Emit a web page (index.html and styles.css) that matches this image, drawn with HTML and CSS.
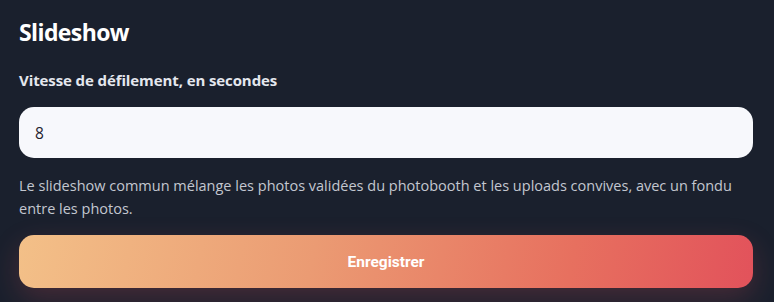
FILE: index.html
```html
<!DOCTYPE html>
<html lang="fr">
<head>
    <meta charset="UTF-8">
    <meta name="viewport" content="width=device-width, initial-scale=1.0">
    <title>Slideshow</title>
    <link rel="stylesheet" href="styles.css">
</head>
<body>
    <div class="panel">
        <h2>Slideshow</h2>

        <label class="field-label" for="speed">Vitesse de défilement, en secondes</label>
        <input class="field-input" id="speed" type="text" value="8">

        <p class="hint">Le slideshow commun mélange les photos validées du photobooth et les uploads convives, avec un fondu entre les photos.</p>

        <button class="btn-save">Enregistrer</button>
    </div>
</body>
</html>
```
FILE: styles.css
```css
html, body {
    margin: 0;
    height: 100%;
}

body {
    font-family: 'Open Sans', 'Noto Sans', sans-serif;
    background: #1a202d;
    color: #f5f6fa;
    overflow: hidden;
}

.panel {
    padding: 14px 21px 0 19px;
    display: flex;
    flex-direction: column;
}

h2 {
    margin: 0;
    font-size: 23px;
    font-weight: 700;
    letter-spacing: -0.6px;
    line-height: 36px;
    color: #ffffff;
}

.field-label {
    margin-top: 20px;
    font-size: 15px;
    font-weight: 700;
    letter-spacing: -0.1px;
    color: #e4e7ee;
    line-height: 20px;
}

.field-input {
    margin-top: 17px;
    height: 51px;
    box-sizing: border-box;
    border: none;
    border-radius: 15px;
    background: #f7f8fc;
    padding: 0 16px;
    font-family: inherit;
    font-size: 15.5px;
    color: #1f2430;
    outline: none;
}

.hint {
    margin: 16px 0 0;
    font-size: 14.5px;
    line-height: 23px;
    color: #c3c7d0;
}

.btn-save {
    margin-top: 15px;
    height: 53px;
    border: none;
    border-radius: 15px;
    background: linear-gradient(100deg, #f3c088 0%, #eb9b73 40%, #e7705f 75%, #e2525b 100%);
    box-shadow: 0 10px 28px rgba(226, 82, 91, 0.22);
    font-family: 'Roboto', sans-serif;
    font-size: 15.5px;
    font-weight: 700;
    color: #ffffff;
    cursor: pointer;
}
```
